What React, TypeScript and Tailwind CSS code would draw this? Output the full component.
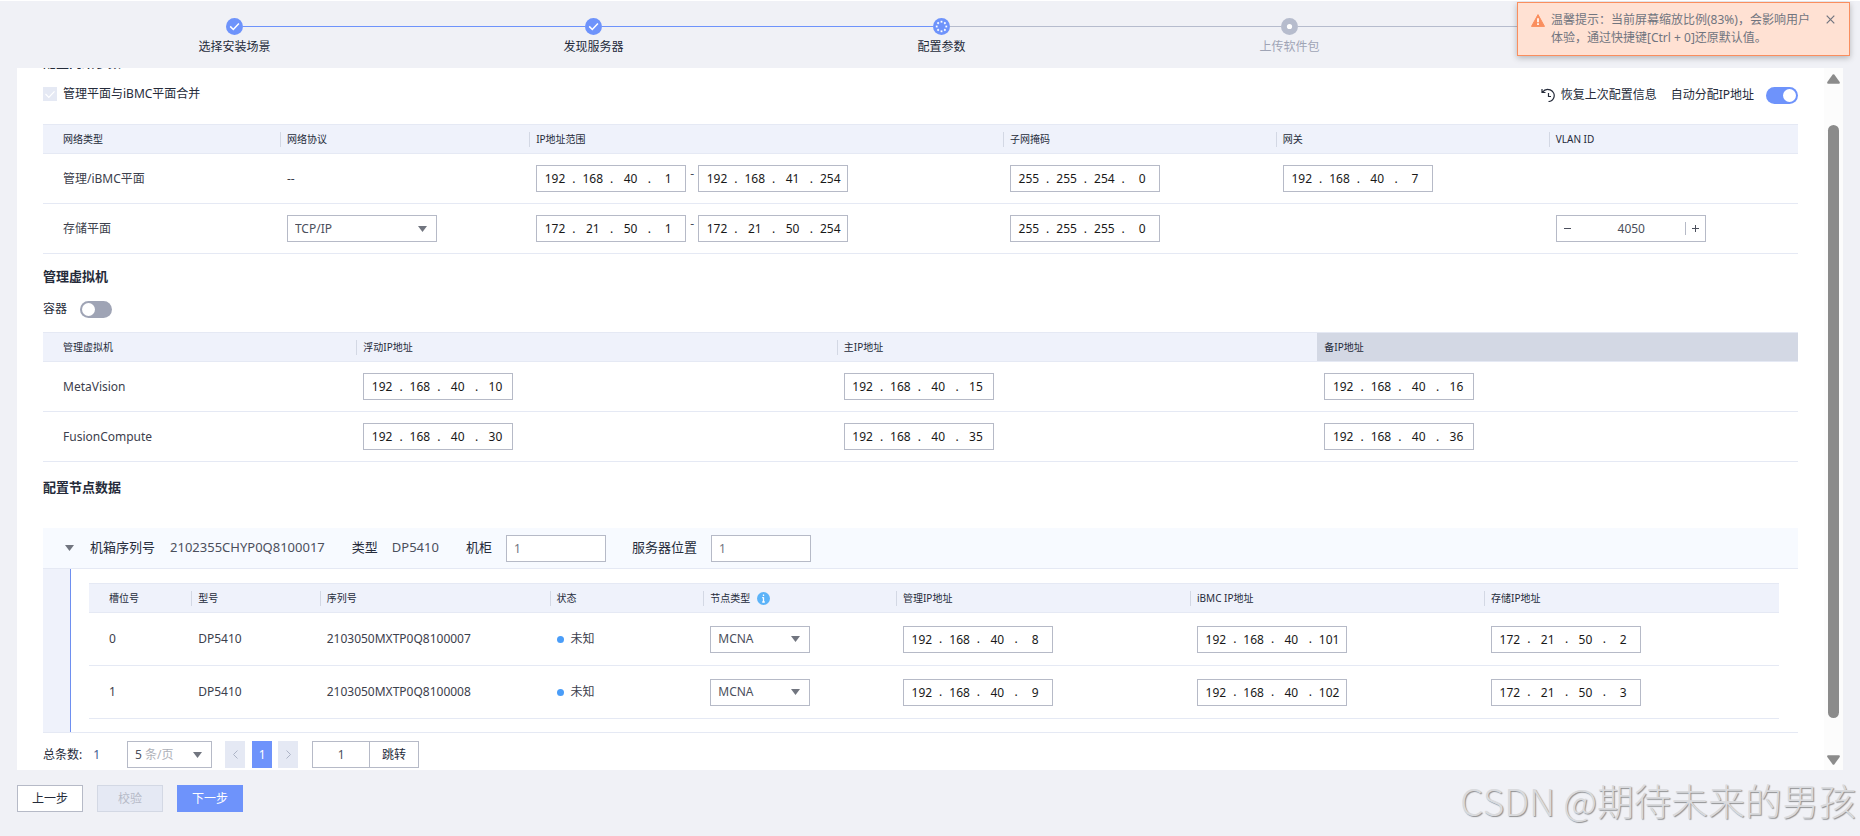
import { useState } from "react";
import type { ReactNode } from "react";
import clsx from "clsx";

function Caret({ className }: { className?: string }) {
  return (
    <svg viewBox="0 0 9 6" aria-hidden="true" className={clsx("h-[6px] w-[9px] fill-[#71757f]", className)}>
      <path d="M0 0h9L4.5 6z" />
    </svg>
  );
}

type StepState = "done" | "active" | "todo";

function StepIcon({ state }: { state: StepState }) {
  if (state === "done") {
    return (
      <svg viewBox="0 0 17 17" aria-hidden="true" className="size-[17px]">
        <circle cx="8.5" cy="8.5" r="8.5" fill="#6e93fb" />
        <path d="M4.2 8.4l3.1 3.1 5.6-6" fill="none" stroke="#fff" strokeWidth="1.5" />
      </svg>
    );
  }
  if (state === "active") {
    return (
      <svg viewBox="0 0 17 17" aria-hidden="true" className="size-[17px]">
        <circle cx="8.5" cy="8.5" r="8.5" fill="#6e93fb" />
        {[0, 45, 90, 135, 180, 225, 270, 315].map((a) => (
          <rect key={a} x="7.6" y="2.8" width="1.8" height="1.8" fill="#fff" transform={`rotate(${a} 8.5 8.5)`} />
        ))}
      </svg>
    );
  }
  return (
    <svg viewBox="0 0 17 17" aria-hidden="true" className="size-[17px]">
      <circle cx="8.5" cy="8.5" r="8.5" fill="#b6bccd" />
      <circle cx="8.5" cy="8.5" r="2.6" fill="#fff" />
    </svg>
  );
}

const steps: { label: string; state: StepState }[] = [
  { label: "选择安装场景", state: "done" },
  { label: "发现服务器", state: "done" },
  { label: "配置参数", state: "active" },
  { label: "上传软件包", state: "todo" },
];

function Stepper() {
  return (
    <ol className="grid grid-cols-[359fr_348fr_348fr_379fr] pt-[17px] pr-[200px] pl-[226px]">
      {steps.map((s) => (
        <li key={s.label} className="flex">
          <div className="flex w-[17px] flex-col items-center gap-[3px]">
            <StepIcon state={s.state} />
            <span className={clsx("whitespace-nowrap leading-[18px]", s.state === "todo" ? "text-[#9fa4b5]" : "text-[#252b3a]")}>
              {s.label}
            </span>
          </div>
          <div className={clsx("mt-2 h-px flex-1", s.state === "done" ? "bg-[#6e93fb]" : "bg-[#b6bccd]")} />
        </li>
      ))}
    </ol>
  );
}

function Toast({ onClose }: { onClose: () => void }) {
  return (
    <div
      role="alert"
      className="absolute top-px right-[10px] flex h-[54px] w-[333px] items-start border border-[#fa8e5e] bg-[#ffe1d3] pt-2 pl-[13px] text-[#71757f] shadow-[0_2px_6px_rgba(0,0,0,0.25)]"
    >
      <svg viewBox="0 0 14 13" aria-hidden="true" className="mt-[3px] mr-[6px] h-[13px] w-[14px] shrink-0">
        <path d="M7 .6L13.5 12.4H.5z" fill="#fa8e5e" stroke="#fa8e5e" strokeLinejoin="round" />
        <path d="M7 4.2v4M7 9.3v1.6" stroke="#fff" strokeWidth="1.7" />
      </svg>
      <p className="whitespace-nowrap leading-[18px]">
        温馨提示：当前屏幕缩放比例(83%)，会影响用户
        <br />
        体验，通过快捷键[Ctrl + 0]还原默认值。
      </p>
      <button type="button" aria-label="关闭" onClick={onClose} className="absolute top-[12px] right-[14px]">
        <svg viewBox="0 0 9 9" className="size-[9px]" fill="none" stroke="#71757f" strokeWidth="1.2">
          <path d="M.7.7l7.6 7.6M8.3.7L.7 8.3" />
        </svg>
      </button>
    </div>
  );
}

function Switch({ id, initial }: { id: string; initial: boolean }) {
  const [on, setOn] = useState(initial);
  return (
    <button
      id={id}
      type="button"
      role="switch"
      aria-checked={on}
      onClick={() => setOn(!on)}
      className={clsx("flex h-[17px] w-8 items-center rounded-full px-[2px]", on ? "justify-end bg-[#6e93fb]" : "justify-start bg-[#9fa4b5]")}
    >
      <span className="size-[13px] rounded-full bg-white" />
    </button>
  );
}

function IpInput({ value, label }: { value: string; label: string }) {
  return (
    <span role="group" aria-label={label} className="flex h-[27px] w-[150px] items-center border border-[#b6bac7] bg-white pl-px text-[#191919]">
      {value.split(".").map((part, i) => (
        <span key={i} className="contents">
          {i > 0 && <span className="w-1 text-center leading-none">.</span>}
          <input
            aria-label={`${label} ${i + 1}`}
            defaultValue={part}
            className="h-full w-0 min-w-0 flex-1 bg-transparent text-center outline-none"
          />
        </span>
      ))}
    </span>
  );
}

function Select({ label, options, className }: { label: string; options: string[]; className: string }) {
  return (
    <span className={clsx("relative flex h-[27px] items-center border border-[#b6bac7] bg-white", className)}>
      <select aria-label={label} className="h-full w-full appearance-none bg-transparent pl-[7px] text-[#4b4f5c] outline-none">
        {options.map((o) => (
          <option key={o}>{o}</option>
        ))}
      </select>
      <Caret className="pointer-events-none absolute right-[9px]" />
    </span>
  );
}

type Column = { title: string; width: string; highlighted?: boolean; info?: boolean };

function DataTable({ columns, rows, rowClass }: { columns: Column[]; rows: ReactNode[][]; rowClass: string }) {
  return (
    <table className="w-full table-fixed border-collapse text-left">
      <thead>
        <tr className="h-[29px] border-y border-[#e5e9f4] bg-[#eff2fb]">
          {columns.map((c, i) => (
            <th
              key={c.title}
              scope="col"
              className={clsx("p-0 pt-px text-[10px] font-normal text-[#252b3a]", c.width, c.highlighted && "bg-[#d3d8e4]")}
            >
              <div className={clsx("flex h-[15px] items-center", i === 0 ? "pl-5" : "border-l border-[#d3d8e4] pl-[6px]")}>
                {c.title}
                {c.info && (
                  <svg viewBox="0 0 13 13" aria-hidden="true" className="ml-[7px] size-[13px]">
                    <circle cx="6.5" cy="6.5" r="6.5" fill="#5cb3f8" />
                    <path d="M6.5 2.4v1.7M6.5 5.2v5M5.2 5.6h1.3M5.2 10h2.6" stroke="#fff" strokeWidth="1.3" />
                  </svg>
                )}
              </div>
            </th>
          ))}
        </tr>
      </thead>
      <tbody>
        {rows.map((cells, r) => (
          <tr key={r} className={clsx("border-b border-[#e5e9f4]", rowClass)}>
            {cells.map((cell, i) => (
              <td key={i} className={clsx("p-0", i === 0 ? "pl-5" : "pl-[7px]")}>
                {cell}
              </td>
            ))}
          </tr>
        ))}
      </tbody>
    </table>
  );
}

const networkColumns: Column[] = [
  { title: "网络类型", width: "w-[13.5%]" },
  { title: "网络协议", width: "w-[14.2%]" },
  { title: "IP地址范围", width: "w-[27%]" },
  { title: "子网掩码", width: "w-[15.55%]" },
  { title: "网关", width: "w-[15.55%]" },
  { title: "VLAN ID", width: "w-[14.2%]" },
];

const vmColumns: Column[] = [
  { title: "管理虚拟机", width: "w-[17.85%]" },
  { title: "浮动IP地址", width: "w-[27.38%]" },
  { title: "主IP地址", width: "w-[27.38%]" },
  { title: "备IP地址", width: "w-[27.39%]", highlighted: true },
];

const nodeColumns: Column[] = [
  { title: "槽位号", width: "w-[6.05%]" },
  { title: "型号", width: "w-[7.6%]" },
  { title: "序列号", width: "w-[13.6%]" },
  { title: "状态", width: "w-[9.1%]" },
  { title: "节点类型", width: "w-[11.4%]", info: true },
  { title: "管理IP地址", width: "w-[17.4%]" },
  { title: "iBMC IP地址", width: "w-[17.4%]" },
  { title: "存储IP地址", width: "w-[17.45%]" },
];

function IpRange({ from, to, name }: { from: string; to: string; name: string }) {
  return (
    <div className="flex">
      <IpInput label={`${name}起始IP`} value={from} />
      <span className="w-3 text-center leading-[18px] text-[#4b4f5c]">-</span>
      <IpInput label={`${name}结束IP`} value={to} />
    </div>
  );
}

function VlanInput() {
  const [value, setValue] = useState(4050);
  return (
    <div className="flex h-[27px] w-[150px] items-center border border-[#b6bac7] text-[#4b4f5c]">
      <button type="button" aria-label="减少" onClick={() => setValue(value - 1)} className="flex h-full w-[21px] items-center justify-center">
        <svg viewBox="0 0 7 7" className="size-[7px]" stroke="#4b4f5c"><path d="M0 3.5h7" /></svg>
      </button>
      <input
        aria-label="VLAN ID"
        value={value}
        onChange={(e) => setValue(Number(e.target.value) || 0)}
        className="h-full w-0 flex-1 bg-transparent text-center outline-none"
      />
      <button
        type="button"
        aria-label="增加"
        onClick={() => setValue(value + 1)}
        className="flex h-[13px] w-5 items-center justify-center border-l border-[#b6bac7]"
      >
        <svg viewBox="0 0 7 7" className="size-[7px]" stroke="#4b4f5c"><path d="M0 3.5h7M3.5 0v7" /></svg>
      </button>
    </div>
  );
}

const networkRows: ReactNode[][] = [
  [
    "管理/iBMC平面",
    "--",
    <IpRange name="管理平面" from="192.168.40.1" to="192.168.41.254" />,
    <IpInput label="管理平面子网掩码" value="255.255.254.0" />,
    <IpInput label="管理平面网关" value="192.168.40.7" />,
    null,
  ],
  [
    "存储平面",
    <Select label="网络协议" options={["TCP/IP", "RoCE"]} className="w-[150px]" />,
    <IpRange name="存储平面" from="172.21.50.1" to="172.21.50.254" />,
    <IpInput label="存储平面子网掩码" value="255.255.255.0" />,
    null,
    <VlanInput />,
  ],
];

const vmRows: ReactNode[][] = [
  ["MetaVision", "192.168.40.10", "192.168.40.15", "192.168.40.16"],
  ["FusionCompute", "192.168.40.30", "192.168.40.35", "192.168.40.36"],
].map(([name, ...ips]) => [
  name,
  ...ips.map((ip, i) => <IpInput key={ip} label={`${name} ${vmColumns[i + 1].title}`} value={ip} />),
]);

const nodeRows: ReactNode[][] = [
  { slot: "0", serial: "2103050MXTP0Q8100007", ips: ["192.168.40.8", "192.168.40.101", "172.21.50.2"] },
  { slot: "1", serial: "2103050MXTP0Q8100008", ips: ["192.168.40.9", "192.168.40.102", "172.21.50.3"] },
].map((n) => [
  n.slot,
  "DP5410",
  n.serial,
  <span className="flex items-center gap-[7px]">
    <span className="size-[7px] rounded-full bg-[#4a9df8]" />
    未知
  </span>,
  <Select label={`节点类型 ${n.slot}`} options={["MCNA", "SCNA"]} className="w-[100px]" />,
  ...n.ips.map((ip, i) => <IpInput key={ip} label={`${nodeColumns[i + 5].title} ${n.slot}`} value={ip} />),
]);

function Chassis() {
  return (
    <section className="border-b border-[#e5e9f4]">
      <div className="flex h-[41px] items-center border-b border-[#e5e9f4] bg-[#f7faff] pl-[22px] text-[13px] text-[#252b3a]">
        <button type="button" aria-label="收起机箱" className="mr-[16px]">
          <Caret />
        </button>
        <span>机箱序列号</span>
        <span className="ml-[15px] text-[#4b4f5c]">2102355CHYP0Q8100017</span>
        <span className="ml-[27px]">类型</span>
        <span className="ml-[14px] text-[#4b4f5c]">DP5410</span>
        <label htmlFor="cabinet" className="ml-[27px]">机柜</label>
        <input id="cabinet" defaultValue="1" className="ml-[14px] h-[27px] w-[100px] border border-[#b6bac7] bg-white px-[7px] text-xs text-[#71757f] outline-none" />
        <label htmlFor="position" className="ml-[26px]">服务器位置</label>
        <input id="position" defaultValue="1" className="ml-[14px] h-[27px] w-[100px] border border-[#b6bac7] bg-white px-[7px] text-xs text-[#71757f] outline-none" />
      </div>
      <div className="flex">
        <div className="w-7 shrink-0 border-r border-[#6e8ff0] bg-[#eff2fb]" />
        <div className="flex-1 pt-[14px] pr-[19px] pb-[13px] pl-[18px]">
          <DataTable columns={nodeColumns} rows={nodeRows} rowClass="h-[53px]" />
        </div>
      </div>
    </section>
  );
}

function Pagination() {
  return (
    <nav aria-label="分页" className="mt-2 flex h-[27px] items-center text-[#252b3a]">
      <span>总条数:</span>
      <span className="ml-[11px] text-[#3f5d8f]">1</span>
      <span className="relative ml-[27px] flex items-center">
        <Select label="每页条数" options={["5", "10", "20"]} className="w-[85px]" />
        <span className="pointer-events-none absolute left-[18px] text-[#adb0b8]">条/页</span>
      </span>
      <button type="button" aria-label="上一页" disabled className="ml-[13px] flex h-full w-5 items-center justify-center bg-[#e5e9f4]">
        <svg viewBox="0 0 5 9" className="h-[9px] w-[5px]" fill="none" stroke="#adb4c6"><path d="M4.5.5l-4 4 4 4" /></svg>
      </button>
      <button type="button" aria-current="page" className="ml-[7px] h-full w-5 bg-[#6e93fb] text-white">1</button>
      <button type="button" aria-label="下一页" disabled className="ml-[6px] flex h-full w-5 items-center justify-center bg-[#e5e9f4]">
        <svg viewBox="0 0 5 9" className="h-[9px] w-[5px]" fill="none" stroke="#adb4c6"><path d="M.5.5l4 4-4 4" /></svg>
      </button>
      <input aria-label="页码" defaultValue="1" className="ml-[14px] h-full w-[57px] border border-r-0 border-[#b6bac7] text-center text-[#4b4f5c] outline-none" />
      <button type="button" className="h-full w-[50px] border border-[#b6bac7]">跳转</button>
    </nav>
  );
}

function ScrollTrack() {
  return (
    <div aria-hidden="true" className="flex w-[19px] shrink-0 flex-col items-center bg-[#fcfcfc] pt-[6px] pb-[5px]">
      <svg viewBox="0 0 13 10" className="h-[10px] w-[13px] fill-[#8b8b8b]">
        <path d="M5.7.6q.8-.9 1.6 0L12.7 8q.6 1.6-.8 1.8H1.1Q-.3 9.6.3 8z" />
      </svg>
      <div className="mt-[41px] mb-[37px] w-[11px] flex-1 rounded-full bg-[#8b8b8b]" />
      <svg viewBox="0 0 13 10" className="h-[10px] w-[13px] rotate-180 fill-[#8b8b8b]">
        <path d="M5.7.6q.8-.9 1.6 0L12.7 8q.6 1.6-.8 1.8H1.1Q-.3 9.6.3 8z" />
      </svg>
    </div>
  );
}

export default function App() {
  const [toastOpen, setToastOpen] = useState(true);
  return (
    <div className="relative min-h-screen overflow-hidden border-t border-white bg-[#f0f1f6] font-['Noto_Sans','Noto_Sans_CJK_SC',sans-serif] text-xs text-[#3c404c]">
      <Stepper />
      {toastOpen && <Toast onClose={() => setToastOpen(false)} />}

      <main className="mx-[17px] mt-[12px] flex overflow-hidden bg-white">
        <div className="min-w-0 flex-1 pr-[26px] pb-[2px] pl-[26px]">
          <h2 className="-mt-[15px] h-[18px] text-[13px] leading-[18px] font-bold text-[#252b3a]">配置网络参数</h2>

          <div className="flex h-[53px] items-start justify-between pt-[14px] text-[#252b3a]">
            <label className="flex h-[18px] items-center gap-[6px]">
              <input type="checkbox" checked disabled readOnly className="peer sr-only" />
              <svg viewBox="0 0 14 14" aria-hidden="true" className="size-[14px] bg-[#e5e9f4]">
                <path d="M2.5 7l3.3 3.3 5.7-6" fill="none" stroke="#fff" strokeWidth="1.2" />
              </svg>
              管理平面与iBMC平面合并
            </label>
            <div className="flex h-5 items-center">
              <button type="button" className="flex items-center gap-[6px]">
                <svg viewBox="0 0 14 14" aria-hidden="true" className="size-[14px]" fill="none" stroke="#252b3a" strokeWidth="1.2">
                  <path d="M1 1v3.5h3.5M1.3 4.3C3.3 1.6 6.5.7 9.3 1.9c3.2 1.3 4.7 4.7 3.5 7.8-.9 2.3-2.9 3.7-5.3 3.8M7.5 5v3.5H10" />
                </svg>
                恢复上次配置信息
              </button>
              <label htmlFor="auto-ip" className="mr-[12px] ml-[14px]">自动分配IP地址</label>
              <Switch id="auto-ip" initial />
            </div>
          </div>

          <DataTable columns={networkColumns} rows={networkRows} rowClass="h-[50px]" />

          <h2 className="mt-[13px] text-[13px] leading-[18px] font-bold text-[#252b3a]">管理虚拟机</h2>
          <div className="mt-[14px] mb-[13px] flex h-5 items-center gap-[13px] text-[#252b3a]">
            <label htmlFor="container">容器</label>
            <Switch id="container" initial={false} />
          </div>

          <DataTable columns={vmColumns} rows={vmRows} rowClass="h-[50px]" />

          <h2 className="mt-[16px] mb-[32px] text-[13px] leading-[18px] font-bold text-[#252b3a]">配置节点数据</h2>
          <Chassis />
          <Pagination />
        </div>
        <ScrollTrack />
      </main>

      <footer className="mx-[17px] mt-[15px] mb-6 flex h-[27px] gap-[14px]">
        <button type="button" className="w-[66px] border border-[#b6bac7] bg-white text-[#252b3a]">上一步</button>
        <button type="button" disabled className="w-[66px] border border-[#d3d8e4] bg-[#e5e9f4] text-[#b6bac7]">校验</button>
        <button type="button" className="w-[66px] bg-[#6e93fb] text-white">下一步</button>
      </footer>

      <p className="pointer-events-none absolute right-[4px] bottom-[12px] font-['Noto_Sans_CJK_SC_Light','Noto_Sans_CJK_SC',sans-serif] text-[37px] leading-[48px] font-light whitespace-nowrap text-[#d9dadd] [text-shadow:1px_1px_1px_#8f9093]">
        CSDN @期待未来的男孩
      </p>
    </div>
  );
}
